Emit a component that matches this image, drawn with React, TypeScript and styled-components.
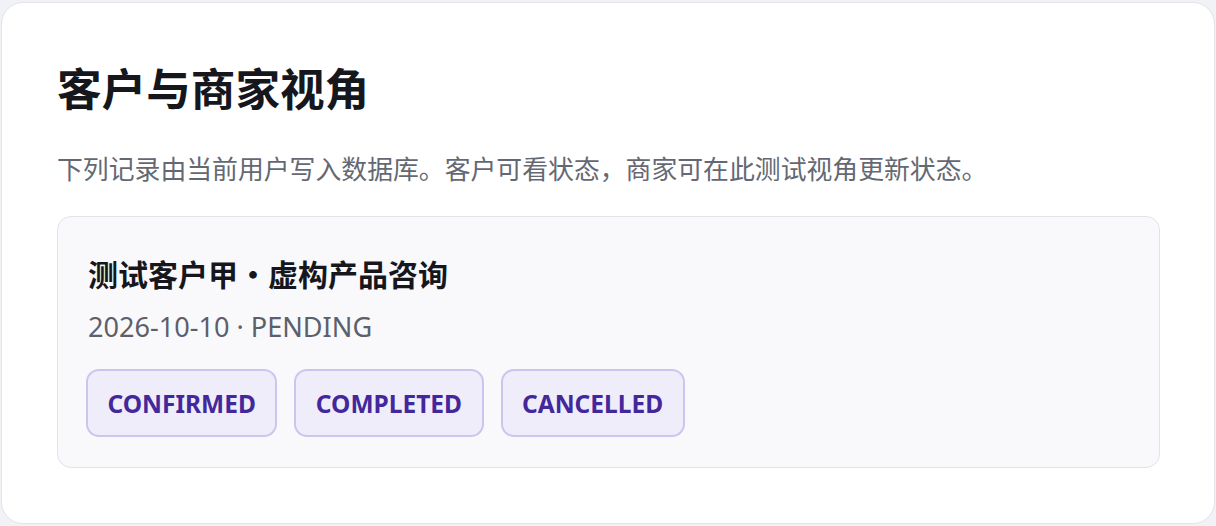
import React from "react";
import styled, { createGlobalStyle } from "styled-components";

const GlobalStyle = createGlobalStyle`
  html, body {
    margin: 0;
    padding: 0;
    background: #f1f2f5;
  }
  body {
    padding: 2px 1px 0 1px;
    font-family: "Noto Sans", "Noto Sans CJK SC", sans-serif;
  }
`;

const Card = styled.section`
  box-sizing: border-box;
  width: 1214px;
  background: #ffffff;
  border: 1px solid #e3e4e9;
  border-radius: 22px;
  padding: 56px 54px 55px 55px;
`;

const Title = styled.h1`
  margin: 0 0 34px 0;
  font-size: 44.6px;
  line-height: 56px;
  font-weight: 700;
  color: #16171d;
  font-family: "Noto Sans CJK SC", "Noto Sans", sans-serif;
`;

const Subtitle = styled.p`
  margin: 0 0 27px 0;
  font-size: 25.85px;
  line-height: 40px;
  color: #646873;
  font-family: "Noto Sans", "Noto Sans CJK SC", sans-serif;
`;

const Booking = styled.div`
  background: #f9f9fc;
  border: 1px solid #e2e2ea;
  border-radius: 14px;
  padding: 34px 30px 30px 30px;
`;

const BookingTitle = styled.h2`
  margin: 0 0 12px 0;
  font-size: 30px;
  line-height: 44px;
  font-weight: 700;
  color: #16171d;
  font-family: "Noto Sans CJK SC", "Noto Sans", sans-serif;
`;

const Meta = styled.div`
  margin: 0 0 22px 0;
  font-size: 27.1px;
  line-height: 40px;
  color: #5b606b;
`;

const Actions = styled.div`
  display: flex;
  gap: 17px;
  margin-left: -2px;
`;

const StatusButton = styled.button`
  box-sizing: border-box;
  height: 68px;
  padding: 0 19.5px;
  border: 2px solid #cdc4ef;
  border-radius: 13px;
  background: #f0edfb;
  color: #42289b;
  font-family: "Noto Sans", sans-serif;
  font-weight: 700;
  font-size: 24.5px;
  cursor: pointer;
`;

const statuses = ["CONFIRMED", "COMPLETED", "CANCELLED"];

export default function App() {
  return (
    <>
      <GlobalStyle />
      <Card>
        <Title>客户与商家视角</Title>
        <Subtitle>
          下列记录由当前用户写入数据库。客户可看状态，商家可在此测试视角更新状态。
        </Subtitle>
        <Booking>
          <BookingTitle>测试客户甲・虚构产品咨询</BookingTitle>
          <Meta>2026-10-10 · PENDING</Meta>
          <Actions>
            {statuses.map((s) => (
              <StatusButton key={s}>{s}</StatusButton>
            ))}
          </Actions>
        </Booking>
      </Card>
    </>
  );
}
